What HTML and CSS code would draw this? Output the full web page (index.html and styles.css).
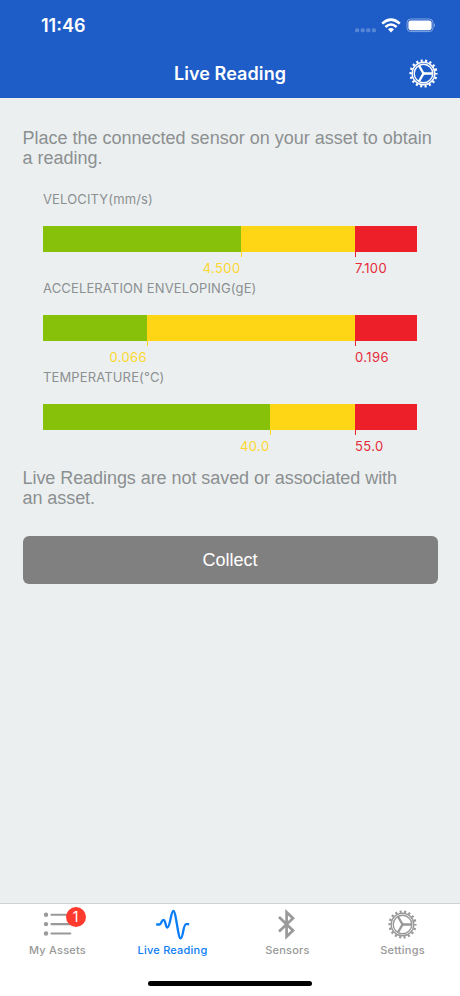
FILE: index.html
```html
<!DOCTYPE html>
<html lang="en">
<head>
<meta charset="utf-8">
<title>Live Reading</title>
<link rel="stylesheet" href="styles.css">
</head>
<body>
<svg width="0" height="0" class="defs">
  <symbol id="gear" viewBox="-14.5 -14.5 29 29">
    <g fill="none" stroke="currentColor">
      <circle r="12.9" stroke-width="2.4" stroke-dasharray="2.1 2.403" stroke-dashoffset="1.05"/>
      <circle r="11.3" stroke-width="1.4"/>
      <circle r="9.3" stroke-width="1.4"/>
      <path stroke-width="2.3" d="M0 0H9.3M0 0L-4.65 -8.05M0 0L-4.65 8.05"/>
    </g>
    <path fill="currentColor" d="M3 0L-1.5 -2.6L-1.3 0L-1.5 2.6Z"/>
  </symbol>
</svg>
<div class="screen">
  <header class="header">
    <div class="status">
      <span class="time">11:46</span>
      <svg class="indicators" width="82" height="18" viewBox="0 0 82 18">
        <g fill="#fff" fill-opacity=".25"><rect x="1" y="11.3" width="4.2" height="4" rx="1.5"/><rect x="6.6" y="11.3" width="4.2" height="4" rx="1.5"/><rect x="12.2" y="11.3" width="4.2" height="4" rx="1.5"/><rect x="17.8" y="11.3" width="4.2" height="4" rx="1.5"/></g>
        <g fill="none" stroke="#fff" stroke-width="2.6"><path d="M28.2 6.6Q37 -1.2 45.8 6.6"/><path d="M31.4 10Q37 5 42.6 10"/></g>
        <path fill="#fff" d="M34 12.3Q37 9.8 40 12.3L37 15.4Z"/>
        <rect x="53" y="2" width="26" height="12.6" rx="3.8" fill="none" stroke="#fff" stroke-opacity=".45"/>
        <rect x="54.4" y="3.4" width="23.2" height="9.8" rx="2.4" fill="#fff"/>
        <path d="M80 6.2Q82 8.2 80 10.2Z" fill="#fff" fill-opacity=".5"/>
      </svg>
    </div>
    <div class="navbar">
      <h1 class="title">Live Reading</h1>
      <svg class="nav-gear"><use href="#gear"/></svg>
    </div>
  </header>
  <main class="content">
    <p class="note intro">Place the connected sensor on your asset to obtain<br>a reading.</p>
    <section class="gauges">
      <div class="gauge velocity">
        <div class="label">VELOCITY(mm/s)</div>
        <div class="bar"><i class="ok"></i><i class="warn"></i><i class="alarm"></i></div>
        <div class="limits"><span class="low">4.500</span><span class="high">7.100</span></div>
      </div>
      <div class="gauge acceleration">
        <div class="label">ACCELERATION ENVELOPING(gE)</div>
        <div class="bar"><i class="ok"></i><i class="warn"></i><i class="alarm"></i></div>
        <div class="limits"><span class="low">0.066</span><span class="high">0.196</span></div>
      </div>
      <div class="gauge temperature">
        <div class="label">TEMPERATURE(°C)</div>
        <div class="bar"><i class="ok"></i><i class="warn"></i><i class="alarm"></i></div>
        <div class="limits"><span class="low">40.0</span><span class="high">55.0</span></div>
      </div>
    </section>
    <p class="note closing">Live Readings are not saved or associated with<br>an asset.</p>
    <button class="collect">Collect</button>
  </main>
  <footer class="footer">
    <nav class="tabs">
      <div class="tab">
        <div class="icon assets">
          <svg width="30" height="30" viewBox="0 0 30 30"><g fill="currentColor"><circle cx="3" cy="5.8" r="2.2"/><circle cx="3" cy="15.1" r="2.2"/><circle cx="3" cy="24.5" r="2.2"/></g><path d="M8.5 5.8H27.3M8.5 15.1H27.3M8.5 24.5H27.3" stroke="currentColor" stroke-width="2.1" stroke-linecap="round"/></svg>
          <span class="badge">1</span>
        </div>
        <span>My Assets</span>
      </div>
      <div class="tab active">
        <div class="icon">
          <svg width="34" height="32" viewBox="0 0 34 32"><path d="M.2 16.5H3.4C5.4 16.5 5.4 11.8 7.5 11.8S9.6 19.6 11.4 19.6C14.2 19.6 14.8 3 17.4 3S22 30.4 24.6 30.4S27.2 16.2 30.1 16.2H33.2" fill="none" stroke="currentColor" stroke-width="2.3"/></svg>
        </div>
        <span>Live Reading</span>
      </div>
      <div class="tab">
        <div class="icon">
          <svg width="30" height="32" viewBox="0 0 30 32"><path d="M6 9L20 22.6L13.6 28.6V4.2L20 10.2L6 23.4" fill="none" stroke="currentColor" stroke-width="2.7"/></svg>
        </div>
        <span>Sensors</span>
      </div>
      <div class="tab">
        <div class="icon"><svg width="29" height="29"><use href="#gear"/></svg></div>
        <span>Settings</span>
      </div>
    </nav>
    <div class="home"></div>
  </footer>
</div>
</body>
</html>
```
FILE: styles.css
```css
* { box-sizing: border-box; }
body { margin: 0; font-family: Inter, sans-serif; }
.defs { position: absolute; }
.screen {
  display: flex;
  flex-direction: column;
  height: 996px;
  background: #ebeff0;
}
.header { height: 98px; background: #1e5cc8; color: #fff; }
.status {
  display: flex;
  justify-content: space-between;
  align-items: center;
  height: 49px;
  padding: 2px 24px 0 41px;
}
.time { font-size: 18px; font-weight: 600; letter-spacing: 0; }
.navbar {
  display: grid;
  grid-template-columns: 1fr auto 1fr;
  align-items: center;
  height: 49px;
  padding: 0 22.5px;
}
.title {
  grid-column: 2;
  margin: 0;
  font-size: 18px;
  font-weight: 600;
  letter-spacing: .08px;
}
.nav-gear { justify-self: end; width: 29px; height: 29px; }
.content { flex: 1; padding: 29.5px 22px 0 22.5px; }
.note {
  margin: 0;
  font: 18px/20.5px "Liberation Sans", sans-serif;
  color: #8c9090;
  white-space: nowrap;
}
.closing { letter-spacing: -.06px; }
.gauges { padding: 20.5px 20.5px 11.5px; }
.gauge { height: 89px; }
.velocity { --low: 197.5px; }
.acceleration { --low: 104px; }
.temperature { --low: 226.5px; }
.label {
  height: 36.5px;
  font-size: 13px;
  line-height: 20px;
  letter-spacing: .14px;
  color: #8c9090;
}
.bar, .limits {
  display: grid;
  grid-template-columns: var(--low) 1fr 62px;
  width: 374px;
}
.bar { height: 26.4px; }
.ok { background: #88c10a; }
.warn { background: #ffd616; }
.alarm { background: #ed202a; }
.warn, .alarm { position: relative; }
.warn::after, .alarm::after {
  content: "";
  position: absolute;
  left: 0;
  top: 100%;
  width: 1px;
  height: 5.5px;
  background: #ffd616;
}
.alarm::after { background: #ed202a; }
.limits { padding-top: 6px; font-size: 13px; line-height: 20px; letter-spacing: .4px; }
.low { justify-self: end; color: #fdd72e; }
.high { grid-column: 3; color: #e52a39; }
.collect {
  display: block;
  width: 415px;
  height: 48.5px;
  margin-top: 27px;
  padding: 2px 0 0;
  border: 0;
  border-radius: 6px;
  background: #808080;
  color: #fff;
  font: 18px "Liberation Sans", sans-serif;
}
.footer { height: 93px; border-top: 1px solid #cfd2d3; background: #fff; }
.tabs { display: grid; grid-template-columns: repeat(4, 1fr); height: 77px; }
.tab {
  display: flex;
  flex-direction: column;
  align-items: center;
  padding-top: 3px;
  color: #999;
  font-size: 11px;
  font-weight: 500;
  line-height: 18px;
  letter-spacing: .22px;
}
.active { color: #0a7df5; }
.icon { display: flex; align-items: center; height: 34px; position: relative; }
.badge {
  position: absolute;
  left: 23px;
  top: 0;
  width: 20px;
  height: 20px;
  border-radius: 50%;
  background: #ff3b30;
  color: #fff;
  font-size: 14px;
  font-weight: 400;
  line-height: 20px;
  letter-spacing: 0;
  text-align: center;
}
.home { width: 164px; height: 5px; margin: 0 auto; border-radius: 3px; background: #000; }
```
